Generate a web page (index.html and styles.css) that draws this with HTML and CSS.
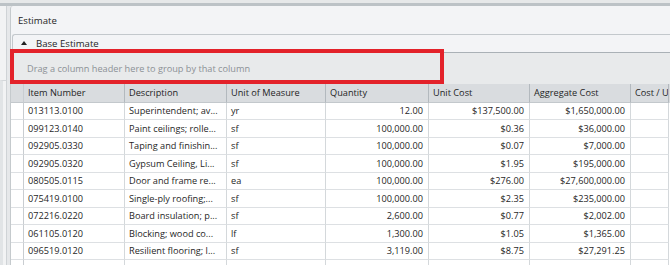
FILE: index.html
```html
<!DOCTYPE html>
<html lang="en">
<head>
  <meta charset="UTF-8">
  <title>Estimate</title>
  <link rel="stylesheet" href="styles.css">
</head>
<body>
  <div class="topbar"></div>

  <div class="workspace">
    <div class="side">
      <div class="side-top"></div>
      <div class="side-bottom"></div>
    </div>

    <section class="panel">
      <header class="panel-title">Estimate</header>

      <div class="tab">
        <span class="caret"></span>
        <span>Base Estimate</span>
      </div>

      <div class="group-panel">Drag a column header here to group by that column</div>

      <div class="grid">
        <div class="row head">
          <div class="cell ind"></div>
          <div class="cell">Item Number</div>
          <div class="cell">Description</div>
          <div class="cell">Unit of Measure</div>
          <div class="cell">Quantity</div>
          <div class="cell">Unit Cost</div>
          <div class="cell">Aggregate Cost</div>
          <div class="cell">Cost / Unit</div>
        </div>

        <div class="row">
          <div class="cell ind"></div>
          <div class="cell">013113.0100</div>
          <div class="cell">Superintendent; av...</div>
          <div class="cell">yr</div>
          <div class="cell num">12.00</div>
          <div class="cell num">$137,500.00</div>
          <div class="cell num">$1,650,000.00</div>
          <div class="cell"></div>
        </div>
        <div class="row">
          <div class="cell ind"></div>
          <div class="cell">099123.0140</div>
          <div class="cell">Paint ceilings; rolle...</div>
          <div class="cell">sf</div>
          <div class="cell num">100,000.00</div>
          <div class="cell num">$0.36</div>
          <div class="cell num">$36,000.00</div>
          <div class="cell"></div>
        </div>
        <div class="row">
          <div class="cell ind"></div>
          <div class="cell">092905.0330</div>
          <div class="cell">Taping and finishin...</div>
          <div class="cell">sf</div>
          <div class="cell num">100,000.00</div>
          <div class="cell num">$0.07</div>
          <div class="cell num">$7,000.00</div>
          <div class="cell"></div>
        </div>
        <div class="row">
          <div class="cell ind"></div>
          <div class="cell">092905.0320</div>
          <div class="cell">Gypsum Ceiling, Li...</div>
          <div class="cell">sf</div>
          <div class="cell num">100,000.00</div>
          <div class="cell num">$1.95</div>
          <div class="cell num">$195,000.00</div>
          <div class="cell"></div>
        </div>
        <div class="row">
          <div class="cell ind"></div>
          <div class="cell">080505.0115</div>
          <div class="cell">Door and frame re...</div>
          <div class="cell">ea</div>
          <div class="cell num">100,000.00</div>
          <div class="cell num">$276.00</div>
          <div class="cell num">$27,600,000.00</div>
          <div class="cell"></div>
        </div>
        <div class="row">
          <div class="cell ind"></div>
          <div class="cell">075419.0100</div>
          <div class="cell">Single-ply roofing;...</div>
          <div class="cell">sf</div>
          <div class="cell num">100,000.00</div>
          <div class="cell num">$2.35</div>
          <div class="cell num">$235,000.00</div>
          <div class="cell"></div>
        </div>
        <div class="row">
          <div class="cell ind"></div>
          <div class="cell">072216.0220</div>
          <div class="cell">Board insulation; p...</div>
          <div class="cell">sf</div>
          <div class="cell num">2,600.00</div>
          <div class="cell num">$0.77</div>
          <div class="cell num">$2,002.00</div>
          <div class="cell"></div>
        </div>
        <div class="row">
          <div class="cell ind"></div>
          <div class="cell">061105.0120</div>
          <div class="cell">Blocking; wood co...</div>
          <div class="cell">lf</div>
          <div class="cell num">1,300.00</div>
          <div class="cell num">$1.05</div>
          <div class="cell num">$1,365.00</div>
          <div class="cell"></div>
        </div>
        <div class="row">
          <div class="cell ind"></div>
          <div class="cell">096519.0120</div>
          <div class="cell">Resilient flooring; l...</div>
          <div class="cell">sf</div>
          <div class="cell num">3,119.00</div>
          <div class="cell num">$8.75</div>
          <div class="cell num">$27,291.25</div>
          <div class="cell"></div>
        </div>
        <div class="row">
          <div class="cell ind"></div>
          <div class="cell"></div>
          <div class="cell"></div>
          <div class="cell"></div>
          <div class="cell"></div>
          <div class="cell"></div>
          <div class="cell"></div>
          <div class="cell"></div>
        </div>
      </div>
    </section>
  </div>

  <!-- highlight drawn over the group panel -->
  <div class="highlight"></div>
</body>
</html>
```

FILE: styles.css
```css
* {
  box-sizing: border-box;
}

body {
  margin: 0;
  width: 670px;
  height: 265px;
  overflow: hidden;
  position: relative;
  background: #e9ebec;
  font-family: 'Open Sans', 'Noto Sans', sans-serif;
  font-size: 9.2px;
  color: #1f1f1f;
}

.topbar {
  height: 6px;
  background: #e6e8e9;
  border-bottom: 3px solid #bcc2c6;
}

.workspace {
  display: flex;
  height: 259px;
  overflow: hidden;
}

.side {
  width: 10px;
  flex-shrink: 0;
  display: flex;
  flex-direction: column;
  background: #e6e8ea;
}

.side-top {
  width: 7px;
  height: 74px;
  background: #f2f3f4;
  border-right: 1px solid #cfd3d6;
}

.side-bottom {
  flex: 1;
  width: 7px;
  background: #f2f3f4;
  border-top: 1px solid #d3d7da;
  border-left: 3px solid #e1e4e6;
  border-right: 1px solid #cfd3d6;
}

.panel {
  flex: 1;
  min-width: 0;
  background: #f3f4f6;
  border-left: 1px solid #c5cacd;
  border-top-left-radius: 3px;
  display: flex;
  flex-direction: column;
}

.panel-title {
  flex-shrink: 0;
  height: 28px;
  padding-left: 7px;
  display: flex;
  align-items: center;
  font-size: 9.6px;
}

.tab {
  flex-shrink: 0;
  height: 19px;
  margin-left: 1px;
  display: flex;
  align-items: center;
  gap: 9px;
  padding-left: 8px;
  border-top: 1px solid #c3c8cc;
  border-left: 1px solid #c3c8cc;
  border-bottom: 1px solid #aab1b6;
  border-top-left-radius: 3px;
  font-size: 9.6px;
}

.caret {
  width: 0;
  height: 0;
  border-left: 3px solid transparent;
  border-right: 3px solid transparent;
  border-bottom: 4px solid #222;
  margin-top: -2px;
}

.group-panel {
  flex-shrink: 0;
  height: 31px;
  display: flex;
  align-items: center;
  padding-left: 16px;
  background: #e8eaeb;
  color: #8c9196;
}

.grid {
  flex: 1;
  background: #ffffff;
}

.row {
  display: grid;
  grid-template-columns: 13px 101px 102px 99px 103px 101px 101px 38px;
  height: 17.5px;
}

.row.head {
  height: 18.5px;
  background: #d9dcdf;
}

.cell {
  border-right: 1px solid #d4d8db;
  border-bottom: 1px solid #dde0e3;
  padding: 0 4px;
  display: flex;
  align-items: center;
  white-space: nowrap;
  overflow: hidden;
}

.head .cell {
  border-right-color: #b3b9be;
  border-bottom-color: #c3c8cc;
}

.cell.ind {
  padding: 0;
  border-right-color: #c9cdd1;
}

.cell.num {
  justify-content: flex-end;
  padding-right: 5px;
}

.highlight {
  position: absolute;
  left: 10px;
  top: 49px;
  width: 434px;
  height: 35px;
  border: 4px solid #e3222a;
}
```
